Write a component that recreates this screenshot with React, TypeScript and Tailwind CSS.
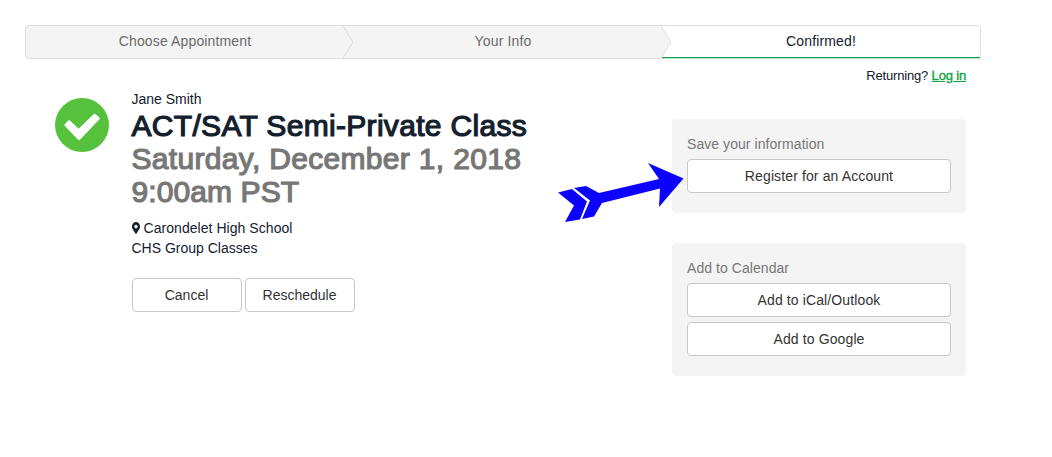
import type { ReactNode } from "react";
import { FaMapMarkerAlt } from "react-icons/fa";

const STEPS = ["Choose Appointment", "Your Info", "Confirmed!"];
const CURRENT_STEP = 2;

function Chevron() {
  return (
    <svg width="12" height="32" viewBox="0 0 12 32" className="absolute top-0 -left-px z-10">
      <path d="M0 0L10 16L0 32Z" fill="#f4f4f4" />
      <path d="M0 0L10 16L0 32" fill="none" stroke="#dcdcdc" />
    </svg>
  );
}

function Steps() {
  return (
    <div className="flex h-[34px] w-[956px] rounded border border-[#dedede] bg-[#f4f4f4] tracking-[0.14px]">
      {STEPS.map((step, i) => (
        <div
          key={step}
          className={
            i === CURRENT_STEP
              ? "relative flex-1 rounded-tr-[3px] border-b border-b-[#12a150] bg-white text-center leading-[30px] text-[#14202e] shadow-[0_1px_0_#b5e5c8]"
              : "relative flex-1 text-center leading-[30px] text-[#6b6b6b]"
          }
        >
          {i > 0 && <Chevron />}
          <span>{step}</span>
        </div>
      ))}
    </div>
  );
}

function CheckCircle() {
  return (
    <svg width="54" height="54" viewBox="0 0 54 54" className="mt-[9px] mr-[22.5px] shrink-0">
      <circle cx="27" cy="27" r="27" fill="#56c13c" />
      <path
        d="M10.600 27L14 23.500L23.700 32.500L39.700 17L43.500 20.500L24 40.800Z"
        fill="#fff"
        stroke="#fff"
        strokeWidth="2.5"
        strokeLinejoin="round"
      />
    </svg>
  );
}

function Button({ children, className = "" }: { children: ReactNode; className?: string }) {
  return (
    <button className={`h-[34px] rounded border border-[#c8c8c8] bg-white text-[#333] ${className}`}>
      {children}
    </button>
  );
}

function Panel({ title, children }: { title: string; children: ReactNode }) {
  return (
    <section className="rounded bg-[#f4f4f4] px-[15px] pt-[15px] pb-5 tracking-[0.12px]">
      <h3 className="mb-[5px] tracking-[0.06px] text-[#777]">{title}</h3>
      <div className="flex flex-col gap-[5px]">{children}</div>
    </section>
  );
}

function Arrow() {
  return (
    <svg width="126" height="62" viewBox="0 0 126 62" className="absolute top-[162px] left-[558px]">
      <g fill="#0c00ff">
        <path d="M0 30.5L14 27L29 39.5L22 57.5L7 60L16 43.5Z" />
        <path d="M16 26L28 24L41 31L101 17L90 1L125.5 16.5L101 45L102 26.500L44 41L36 54.500L24 57L32 38.500Z" />
      </g>
    </svg>
  );
}

export default function App() {
  return (
    <div className="relative h-[457px] w-[1052px] bg-white pt-[25px] pl-[25px] font-['Liberation_Sans',Arial,sans-serif] text-sm leading-5 text-[#14202e]">
      <Steps />
      <div className="flex w-[941px] justify-between">
        <main className="flex pt-[30px] pl-[30px]">
          <CheckCircle />
          <div>
            <p>Jane Smith</p>
            <h1 className="text-[30px] leading-[33px] tracking-[0.32px] [-webkit-text-stroke:1.2px_currentColor]">
              ACT/SAT Semi-Private Class
              <span className="block text-[#777]">Saturday, December 1, 2018</span>
              <span className="block tracking-[0.1px] text-[#777]">9:00am PST</span>
            </h1>
            <p className="mt-[10px] flex items-center tracking-[0.05px]">
              <FaMapMarkerAlt className="mr-1 h-3 w-2" preserveAspectRatio="none" />
              Carondelet High School
            </p>
            <p>CHS Group Classes</p>
            <div className="mt-5 flex gap-[3px]">
              <Button className="w-[110px]">Cancel</Button>
              <Button className="w-[110px]">Reschedule</Button>
            </div>
          </div>
        </main>

        <aside className="w-[294px] pt-[7px]">
          <p className="mb-[33px] text-right text-[13px] tracking-[-0.17px]">
            Returning? <a href="#" className="text-[#12a844] underline [-webkit-text-stroke:0.4px_currentColor]">Log in</a>
          </p>
          <div className="flex flex-col gap-[30px]">
            <Panel title="Save your information">
              <Button>Register for an Account</Button>
            </Panel>
            <Panel title="Add to Calendar">
              <Button>Add to iCal/Outlook</Button>
              <Button>Add to Google</Button>
            </Panel>
          </div>
        </aside>
      </div>
      <Arrow />
    </div>
  );
}
